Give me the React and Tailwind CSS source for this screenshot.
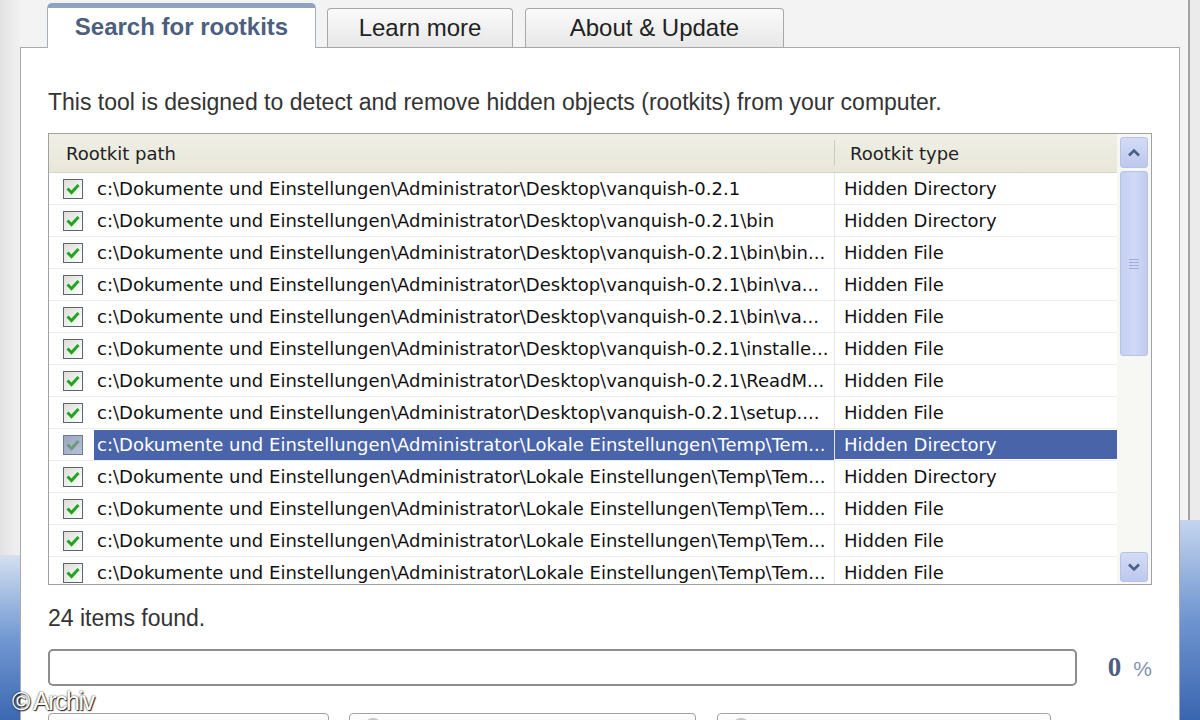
import { Fragment } from 'react'

const base = 'c:\\Dokumente und Einstellungen\\Administrator\\'
const desk = base + 'Desktop\\vanquish-0.2.1'
const temp = base + 'Lokale Einstellungen\\Temp\\Tem...'

const rows = [
  { path: desk, type: 'Hidden Directory' },
  { path: desk + '\\bin', type: 'Hidden Directory' },
  { path: desk + '\\bin\\bin...', type: 'Hidden File' },
  { path: desk + '\\bin\\va...', type: 'Hidden File' },
  { path: desk + '\\bin\\va...', type: 'Hidden File' },
  { path: desk + '\\installe...', type: 'Hidden File' },
  { path: desk + '\\ReadM...', type: 'Hidden File' },
  { path: desk + '\\setup....', type: 'Hidden File' },
  { path: temp, type: 'Hidden Directory', selected: true },
  { path: temp, type: 'Hidden Directory' },
  { path: temp, type: 'Hidden File' },
  { path: temp, type: 'Hidden File' },
  { path: temp, type: 'Hidden File' },
]

function CheckBox({ dim }) {
  return (
    <svg width="20" height="20" viewBox="0 0 20 20" className="shrink-0">
      <defs>
        <linearGradient id={dim ? 'cbd' : 'cb'} x1="0" y1="0" x2="1" y2="1">
          <stop offset="0" stopColor={dim ? '#9aa6bf' : '#dcdcd4'} />
          <stop offset="1" stopColor={dim ? '#b7c1d6' : '#ffffff'} />
        </linearGradient>
      </defs>
      <rect x="0.5" y="0.5" width="19" height="19" fill={`url(#${dim ? 'cbd' : 'cb'})`} stroke={dim ? '#6b7a93' : '#55667a'} />
      <path d="M4.5 9.5 L8.5 13.5 L15.5 6" fill="none" stroke={dim ? '#6e9a7c' : '#22a526'} strokeWidth="3" />
    </svg>
  )
}

function Chevron({ down }) {
  return (
    <svg width="14" height="10" viewBox="0 0 14 10">
      <path d={down ? 'M2 2.5 L7 7.5 L12 2.5' : 'M2 7.5 L7 2.5 L12 7.5'} fill="none" stroke="#4b5f86" strokeWidth="2.6" />
    </svg>
  )
}

export default function App() {
  return (
    <div className="relative flex h-[720px] w-[1200px] overflow-hidden bg-[#f3f3f3] font-['Liberation_Sans',Arial,sans-serif]">
      {/* left window edge */}
      <div className="flex w-[20px] flex-col">
        <div className="flex-1 bg-gradient-to-r from-[#e2e2e2] to-[#f1f1f1]" />
        <div className="h-[165px] bg-gradient-to-b from-[#d5e0f0] via-[#7399d2] to-[#3c68b2]" />
      </div>

      <div className="flex w-[1160px] flex-col">
        {/* tabs */}
        <div className="flex h-[47px] shrink-0 items-end pl-[27px]">
          <div className="relative z-10 -mb-px flex h-[45px] w-[269px] items-center justify-center rounded-t-[5px] border-x border-t-[5px] border-x-[#a9afb8] border-t-[#8fa3c1] bg-white pb-[2px] text-[24px] font-bold text-[#4c5f80]">
            Search for rootkits
          </div>
          <div className="ml-[11px] flex h-[39px] w-[186px] items-center justify-center rounded-t-[4px] border-x border-t border-[#a8a8a8] bg-gradient-to-b from-[#fbfbfb] to-[#e7e7e7] text-[24px] text-[#222]">
            Learn more
          </div>
          <div className="ml-[12px] flex h-[39px] w-[259px] items-center justify-center rounded-t-[4px] border-x border-t border-[#a8a8a8] bg-gradient-to-b from-[#fbfbfb] to-[#e7e7e7] text-[24px] text-[#222]">
            About &amp; Update
          </div>
        </div>

        {/* panel */}
        <div className="flex shrink-0 flex-col border border-[#a9a9a9] bg-white px-[27px] pt-[40px]">
          <p className="text-[23px] leading-[28px] text-[#333]">
            This tool is designed to detect and remove hidden objects (rootkits) from your computer.
          </p>

          <div className="mt-[17px] flex h-[452px] border border-[#9ea2a7] font-['DejaVu_Sans',Verdana,sans-serif] text-[18px] text-[#111]">
            <div className="flex w-[1068px] flex-col overflow-hidden">
              <div className="flex h-[39px] shrink-0 items-center border-b border-[#d6d3c5] bg-gradient-to-b from-[#f0efe6] to-[#e8e7d9] text-[#222]">
                <div className="w-[785px] pl-[17px]">Rootkit path</div>
                <div className="h-[26px] w-px bg-[#cfcbbb]" />
                <div className="pl-[15px]">Rootkit type</div>
              </div>
              {rows.map((r, i) => (
                <div key={i} className="flex h-[32px] shrink-0 items-stretch border-b border-[#ececec]">
                  <div className="flex w-[785px] items-center pl-[14px]">
                    <CheckBox dim={r.selected} />
                    <div
                      className={
                        'ml-[11px] flex h-[30px] flex-1 items-center overflow-hidden whitespace-nowrap pl-[3px] ' +
                        (r.selected ? 'bg-[#4a64aa] text-white' : '')
                      }
                    >
                      {r.path}
                    </div>
                  </div>
                  <div className="w-px bg-[#e6e6e6]" />
                  <div
                    className={
                      'flex flex-1 items-center pl-[9px] ' + (r.selected ? 'my-px bg-[#4a64aa] text-white' : '')
                    }
                  >
                    {r.type}
                  </div>
                </div>
              ))}
            </div>

            {/* scrollbar */}
            <div className="flex w-[34px] flex-col bg-[#f7f7f4] px-[3px] pb-[2px] pt-[3px]">
              <div className="flex h-[31px] items-center justify-center rounded-[3px] border border-[#b7c2e6] bg-gradient-to-b from-[#d3dcf6] to-[#bcc8ee]">
                <Chevron />
              </div>
              <div className="mt-[3px] flex h-[185px] items-center justify-center rounded-[3px] border border-[#b7c2e6] bg-gradient-to-r from-[#c4cff2] via-[#d0d9f7] to-[#c0cbef]">
                <div className="flex flex-col gap-[2px]">
                  <div className="h-px w-[10px] bg-[#9fadd8]" />
                  <div className="h-px w-[10px] bg-[#9fadd8]" />
                  <div className="h-px w-[10px] bg-[#9fadd8]" />
                  <div className="h-px w-[10px] bg-[#9fadd8]" />
                </div>
              </div>
              <div className="flex-1" />
              <div className="flex h-[30px] items-center justify-center rounded-[3px] border border-[#b7c2e6] bg-gradient-to-b from-[#d3dcf6] to-[#bcc8ee]">
                <Chevron down />
              </div>
            </div>
          </div>

          <p className="mt-[19px] text-[23px] leading-[28px] text-[#333]">24 items found.</p>

          <div className="mt-[15px] flex items-center">
            <div className="h-[37px] w-[1029px] rounded-[5px] border-2 border-[#8d8d8d] bg-white" />
            <div className="ml-auto flex items-baseline gap-[12px]">
              <span className="font-['Liberation_Serif',serif] text-[27px] font-bold text-[#4d5e7e]">0</span>
              <span className="text-[21px] text-[#8593ad]">%</span>
            </div>
          </div>

          <div className="mt-[25px] flex">
            {[
              ['w-[281px]', false],
              ['ml-[20px] w-[347px]', true],
              ['ml-[21px] w-[334px]', true],
            ].map(([cls, icon], i) => (
              <Fragment key={i}>
                <div className={'flex h-[40px] items-start rounded-[4px] border border-[#a2a2a2] bg-gradient-to-b from-[#fdfdfd] to-[#ebebeb] pl-[14px] pt-[4px] ' + cls}>
                  {icon && <div className="h-[18px] w-[18px] rounded-full border-2 border-[#c4c4c4]" />}
                </div>
              </Fragment>
            ))}
          </div>
        </div>
      </div>

      {/* right window edge */}
      <div className="flex w-[20px] flex-col">
        <div className="flex flex-1 pl-[8px]">
          <div className="w-[2px] bg-[#a4a4a4]" />
          <div className="flex-1 bg-[#ebebeb]" />
        </div>
        <div className="h-[200px] bg-gradient-to-b from-[#c5d5ee] via-[#6f95d0] to-[#3a66b0]" />
      </div>

      <div className="absolute left-[12px] top-[683px] text-[25px] tracking-[-1.5px] text-white [text-shadow:0_0_2px_#222,1px_1px_1px_#222]">
        © Archiv
      </div>
    </div>
  )
}
